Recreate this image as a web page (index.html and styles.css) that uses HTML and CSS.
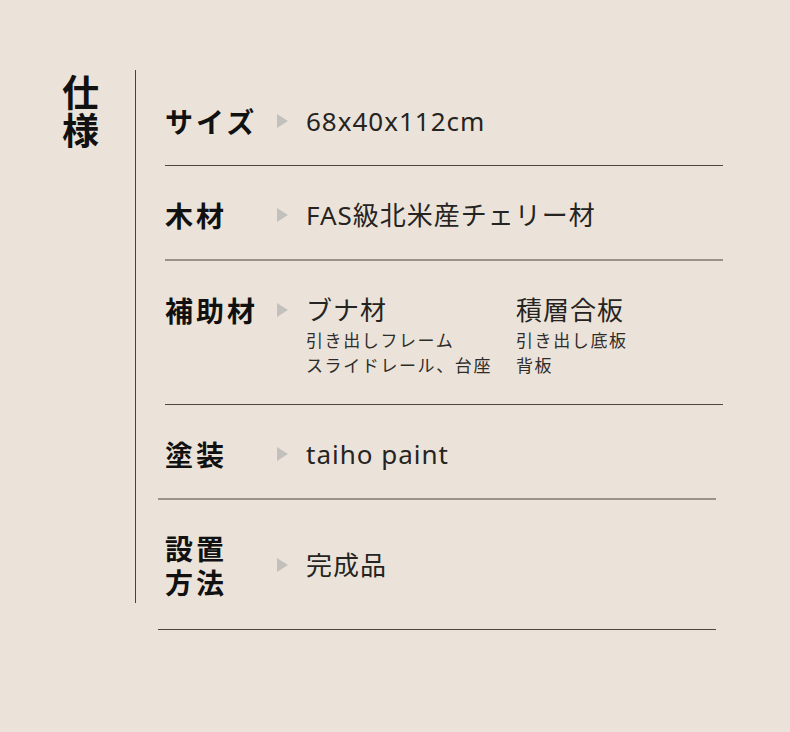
FILE: index.html
```html
<!DOCTYPE html>
<html lang="ja">
<head>
<meta charset="utf-8">
<title>仕様</title>
<link rel="stylesheet" href="styles.css">
</head>
<body>
<div class="spec">
  <h2 class="spec-title"><span class="ch">仕</span><span class="ch">様</span></h2>
  <div class="spec-rule"></div>
  <div class="spec-rows">
    <div class="row line-dark">
      <div class="label">サイズ</div>
      <span class="arrow"></span>
      <div class="value">68x40x112cm</div>
    </div>
    <div class="row line-gray">
      <div class="label">木材</div>
      <span class="arrow"></span>
      <div class="value">FAS級北米産チェリー材</div>
    </div>
    <div class="row line-dark">
      <div class="label">補助材</div>
      <span class="arrow"></span>
      <div class="value value-cols">
        <div class="col col-first">
          <div class="main">ブナ材</div>
          <div class="sub">引き出しフレーム</div>
          <div class="sub">スライドレール、台座</div>
        </div>
        <div class="col">
          <div class="main">積層合板</div>
          <div class="sub">引き出し底板</div>
          <div class="sub">背板</div>
        </div>
      </div>
    </div>
    <div class="row line-gray shifted">
      <div class="label">塗装</div>
      <span class="arrow"></span>
      <div class="value">taiho paint</div>
    </div>
    <div class="row line-dark shifted last">
      <div class="label label-2"><span class="ln">設置</span><span class="ln">方法</span></div>
      <span class="arrow arrow-mid"></span>
      <div class="value value-mid">完成品</div>
    </div>
  </div>
</div>
</body>
</html>
```
FILE: styles.css
```css
* { box-sizing: border-box; margin: 0; padding: 0; }
html, body {
  background: #ebe3d9;
}
body {
  width: 790px;
  height: 732px;
  font-family: "Noto Sans", "Noto Sans CJK JP", sans-serif;
  color: #2a2826;
}
.spec {
  display: flex;
  align-items: flex-start;
  padding: 70px 0 0 62px;
}
.spec-title {
  width: 40px;
  font-size: 37px;
  line-height: 38px;
  font-weight: 700;
  color: #111;
  padding-top: 2px;
  font-family: "Noto Sans CJK JP", sans-serif;
}
.ch, .ln { display: block; }
.spec-rule {
  width: 1px;
  height: 533px;
  background: #4a413b;
  margin-left: 33px;
}
.spec-rows {
  width: 558px;
  margin-left: 29px;
  padding-top: 2px;
}
.row {
  display: flex;
  align-items: flex-start;
  padding: 31px 0 26px;
}
.line-dark { border-bottom: 1px solid #4f4640; }
.line-gray { border-bottom: 2px solid #9a938c; }
.shifted {
  margin-left: -7px;
  margin-right: 7px;
  padding-left: 7px;
}
.last { padding-bottom: 30px; }
.label {
  width: 112px;
  flex-shrink: 0;
  font-family: "Noto Sans CJK JP", sans-serif;
  font-size: 28px;
  line-height: 36px;
  font-weight: 700;
  letter-spacing: 3px;
  color: #111;
}
.label-2 { line-height: 34px; }
.arrow {
  width: 0;
  height: 0;
  margin-top: 11px;
  border-top: 7px solid transparent;
  border-bottom: 7px solid transparent;
  border-left: 11px solid #c3c0bc;
  margin-right: 18px;
  flex-shrink: 0;
}
.arrow-mid { margin-top: 27px; }
.value {
  font-size: 26px;
  line-height: 36px;
  letter-spacing: 1px;
  color: #262422;
}
.value-mid { padding-top: 16px; }
.value-cols { display: flex; }
.col-first { width: 210px; }
.main {
  font-size: 26px;
  line-height: 36px;
}
.sub {
  font-size: 17px;
  line-height: 25px;
  letter-spacing: 1.6px;
  color: #2e2c2a;
}
```
